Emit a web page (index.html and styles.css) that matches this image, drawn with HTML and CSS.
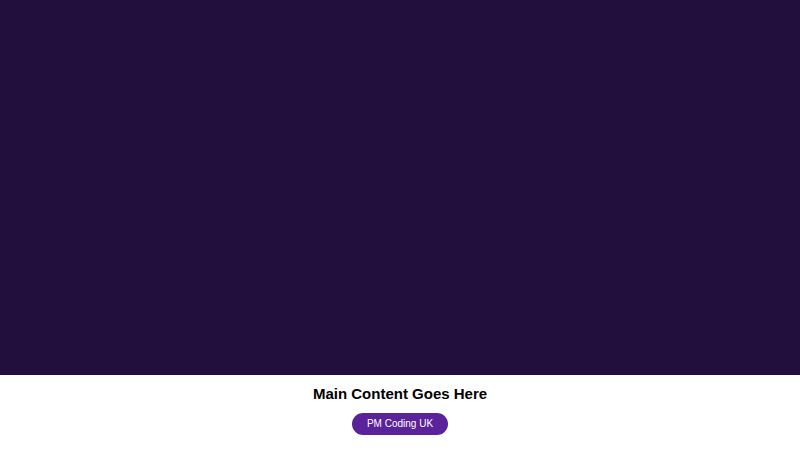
FILE: index.html
```html
<!DOCTYPE html>
<html>
<head>
<meta charset="utf-8">
<link rel="stylesheet" href="styles.css">
</head>
<body>
<header class="hero"></header>
<main class="content">
  <h1 class="title">Main Content Goes Here</h1>
  <a class="pill" href="#">PM Coding UK</a>
</main>
</body>
</html>
```
FILE: styles.css
```css
html, body { margin: 0; padding: 0; background: #ffffff; }
body { font-family: "Liberation Sans", Arial, sans-serif; }
.hero { height: 375px; background: #220f3d; }
.content { display: flex; flex-direction: column; align-items: center; padding-top: 10px; }
.title { margin: 0; font-size: 15px; font-weight: bold; color: #000; line-height: 17px; }
.pill { margin-top: 11px; display: inline-block; background: #5b2399; color: #fff; text-decoration: none; font-size: 10px; line-height: 22px; height: 22px; padding: 0 15px; border-radius: 11px; }
```
